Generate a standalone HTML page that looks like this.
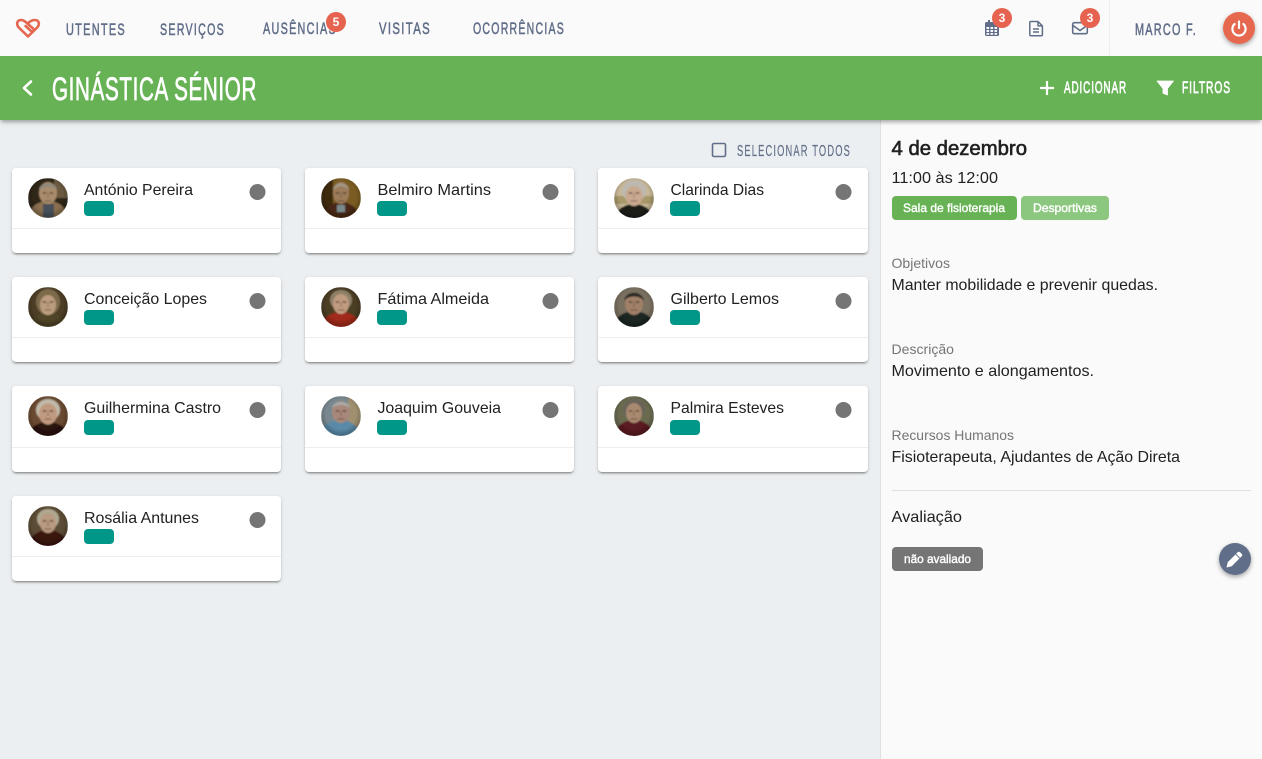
<!DOCTYPE html>
<html lang="pt">
<head>
<meta charset="utf-8">
<title>Ginástica Sénior</title>
<style>
html,body{margin:0;padding:0;width:1262px;height:759px;overflow:hidden;background:#eceff1;font-family:"Liberation Sans",sans-serif}
.b{position:absolute}
#nav{left:0;top:0;width:1262px;height:56px;background:#fafafa}
#bar{left:0;top:56px;width:1262px;height:64px;background:#66b254;box-shadow:0 3px 4px -1px rgba(0,0,0,.35)}
#side{left:880px;top:120px;width:381px;height:639px;background:#fafafa;border-left:1px solid #e0e0e0}
.c{position:absolute;width:269px;background:#fff;border-radius:4px;box-shadow:0 2px 2px -1px rgba(0,0,0,.45),0 1px 4px rgba(0,0,0,.12)}
.c:after{content:"";position:absolute;left:0;right:0;top:60px;height:1px;background:#eeeeee}
.r3:after{top:61px}
svg#t{position:absolute;left:0;top:0}
.n{font-size:16px;fill:#212121}
.h{font-size:17px;fill:#616e89;stroke:#616e89;stroke-width:.55px;letter-spacing:2px}
.w{font-size:16.5px;fill:#fff;stroke:#fff;stroke-width:.7px;letter-spacing:1.5px}
.l{font-size:14px;fill:#757575}
.d{font-size:16px;fill:#212121}
.s{font-size:12px;fill:#fff;stroke:#fff;stroke-width:.4px}
.bn{font-size:12px;fill:#fff;font-weight:bold;text-anchor:middle}
.p{fill:#009688}
.g{fill:#757575}
</style>
</head>
<body>
<div class="b" id="side"></div>
<div class="b" id="nav"></div>
<div class="b" id="bar"></div>
<div class="c" style="left:12px;top:168px;height:85px"></div>
<div class="c" style="left:305px;top:168px;height:85px"></div>
<div class="c" style="left:598px;top:168px;height:85px;width:270px"></div>
<div class="c" style="left:12px;top:277px;height:85px"></div>
<div class="c" style="left:305px;top:277px;height:85px"></div>
<div class="c" style="left:598px;top:277px;height:85px;width:270px"></div>
<div class="c r3" style="left:12px;top:386px;height:86px"></div>
<div class="c r3" style="left:305px;top:386px;height:86px"></div>
<div class="c r3" style="left:598px;top:386px;height:86px;width:270px"></div>
<div class="c" style="left:12px;top:496px;height:85px"></div>
<svg id="t" width="1262" height="759" viewBox="0 0 1262 759" xmlns="http://www.w3.org/2000/svg">
<defs>
<clipPath id="av"><circle cx="20" cy="20" r="20"/></clipPath>
<filter id="bl" x="-20%" y="-20%" width="140%" height="140%"><feGaussianBlur stdDeviation="0.7"/></filter>
<filter id="sh" x="-50%" y="-50%" width="200%" height="200%"><feDropShadow dx="0" dy="2" stdDeviation="2.5" flood-color="#000" flood-opacity=".35"/></filter>
<radialGradient id="vg" cx=".5" cy=".45" r=".55"><stop offset=".7" stop-color="#000" stop-opacity="0"/><stop offset="1" stop-color="#000" stop-opacity=".3"/></radialGradient>
<g id="fd">
<ellipse cx="16.500" cy="15" rx="2" ry="1" fill="#2a1a10" opacity=".45"/>
<ellipse cx="23.500" cy="15" rx="2" ry="1" fill="#2a1a10" opacity=".45"/>
<path d="M20 15v5" stroke="#3a2414" stroke-width="1.500" opacity=".2"/>
<path d="M16.500 23h7" stroke="#3a1a10" stroke-width="1.200" opacity=".4"/>
<circle cx="20" cy="20" r="20" fill="url(#vg)"/>
</g>
</defs>

<!-- nav -->
<rect x="1109" y="0" width="1" height="56" fill="#eeeeee"/>
<path d="M28 36.500 L18.800 27.500 C15.600 24 17.400 19.800 21.300 20 C24 20.100 25.800 22 28.600 24.600 L33 28.400 C34.800 30 32.600 32.400 30.800 30.800 L25.600 26 M28 36.500 L37.200 27.500 C40.400 24 38.600 19.800 34.700 20 C32 20.100 29.600 21.600 28.400 23" fill="none" stroke="#e5674f" stroke-width="2.600" stroke-linecap="round" stroke-linejoin="round"/>
<text class="h" x="66" y="35" textLength="60" lengthAdjust="spacingAndGlyphs">UTENTES</text>
<text class="h" x="160" y="35" textLength="65" lengthAdjust="spacingAndGlyphs">SERVIÇOS</text>
<text class="h" x="263" y="34" textLength="74" lengthAdjust="spacingAndGlyphs">AUSÊNCIAS</text>
<text class="h" x="379" y="34" textLength="52" lengthAdjust="spacingAndGlyphs">VISITAS</text>
<text class="h" x="473" y="34" textLength="92" lengthAdjust="spacingAndGlyphs">OCORRÊNCIAS</text>
<circle cx="336" cy="22" r="10" fill="#e5634f"/>
<text class="bn" x="336" y="26">5</text>

<!-- calendar -->
<g fill="#616e89">
<rect x="985" y="22" width="14" height="14" rx="1.500"/>
<rect x="988" y="20" width="2" height="4"/>
<rect x="994" y="20" width="2" height="4"/>
</g>
<g fill="#fafafa">
<rect x="986.500" y="27" width="2.600" height="2"/><rect x="990.500" y="27" width="2.600" height="2"/><rect x="994.500" y="27" width="2.600" height="2"/>
<rect x="986.500" y="30" width="2.600" height="2"/><rect x="990.500" y="30" width="2.600" height="2"/><rect x="994.500" y="30" width="2.600" height="2"/>
<rect x="986.500" y="33" width="2.600" height="1.800"/><rect x="990.500" y="33" width="2.600" height="1.800"/><rect x="994.500" y="33" width="2.600" height="1.800"/>
</g>
<circle cx="1002" cy="18" r="10" fill="#e5634f"/>
<text class="bn" x="1002" y="22">3</text>
<!-- doc -->
<path d="M1031 21.500h7l4.400 4.400v8.600a1.200 1.200 0 0 1-1.200 1.200h-10.200a1.200 1.200 0 0 1-1.200-1.200v-11.800a1.200 1.200 0 0 1 1.200-1.200zM1038 21.500v4.400h4.400M1033 29h6M1033 32h6" fill="none" stroke="#616e89" stroke-width="1.500" stroke-linejoin="round"/>
<!-- mail -->
<rect x="1072.700" y="22.700" width="14.600" height="11" rx="1.500" fill="none" stroke="#616e89" stroke-width="1.600"/>
<path d="M1073 25.500l7 5 7-5" fill="none" stroke="#616e89" stroke-width="1.600"/>
<circle cx="1090" cy="18" r="10" fill="#e5634f"/>
<text class="bn" x="1090" y="22">3</text>
<text class="h" x="1135" y="35" textLength="62" lengthAdjust="spacingAndGlyphs">MARCO F.</text>
<circle cx="1239" cy="28" r="16" fill="#e5674f" filter="url(#sh)"/>
<path d="M1239 21.500v6.500M1234.600 24a6.600 6.600 0 1 0 8.800 0" fill="none" stroke="#fff" stroke-width="2.200" stroke-linecap="round"/>

<!-- green bar -->
<path d="M31 81.500l-7 6.500 7 6.500" fill="none" stroke="#fff" stroke-width="2.600" stroke-linecap="round" stroke-linejoin="round"/>
<text x="52" y="100" font-size="32" fill="#fff" stroke="#fff" stroke-width=".8" stroke-linejoin="round" letter-spacing="1" textLength="205" lengthAdjust="spacingAndGlyphs">GINÁSTICA SÉNIOR</text>
<path d="M1047 81v14M1040 88h14" stroke="#fff" stroke-width="2.200"/>
<text class="w" x="1064" y="93" textLength="63" lengthAdjust="spacingAndGlyphs">ADICIONAR</text>
<path d="M1157 81h16.500l-6 7.500v6.500l-4.500-1.800v-4.700z" fill="#fff" stroke="#fff" stroke-width=".8" stroke-linejoin="round"/>
<text class="w" x="1182" y="93" textLength="49" lengthAdjust="spacingAndGlyphs">FILTROS</text>

<!-- select all -->
<rect x="712.500" y="143.500" width="13" height="13" rx="1.500" fill="none" stroke="#616e89" stroke-width="1.600"/>
<text x="737" y="156" font-size="16" fill="#616e89" stroke="#616e89" stroke-width=".2" letter-spacing="2" textLength="114" lengthAdjust="spacingAndGlyphs">SELECIONAR TODOS</text>

<!-- names -->
<text class="n" x="84" y="195" textLength="109" lengthAdjust="spacingAndGlyphs">António Pereira</text>
<text class="n" x="377.500" y="195" textLength="113.500" lengthAdjust="spacingAndGlyphs">Belmiro Martins</text>
<text class="n" x="670.500" y="195" textLength="93.500" lengthAdjust="spacingAndGlyphs">Clarinda Dias</text>
<text class="n" x="84" y="304" textLength="123" lengthAdjust="spacingAndGlyphs">Conceição Lopes</text>
<text class="n" x="377.500" y="304" textLength="111.500" lengthAdjust="spacingAndGlyphs">Fátima Almeida</text>
<text class="n" x="670.500" y="304" textLength="108.500" lengthAdjust="spacingAndGlyphs">Gilberto Lemos</text>
<text class="n" x="84" y="413" textLength="137" lengthAdjust="spacingAndGlyphs">Guilhermina Castro</text>
<text class="n" x="377.500" y="413" textLength="123.500" lengthAdjust="spacingAndGlyphs">Joaquim Gouveia</text>
<text class="n" x="670.500" y="413" textLength="113.500" lengthAdjust="spacingAndGlyphs">Palmira Esteves</text>
<text class="n" x="84" y="523" textLength="115" lengthAdjust="spacingAndGlyphs">Rosália Antunes</text>

<!-- pills -->
<rect class="p" x="84" y="201" width="30" height="15" rx="4"/>
<rect class="p" x="377" y="201" width="30" height="15" rx="4"/>
<rect class="p" x="670" y="201" width="30" height="15" rx="4"/>
<rect class="p" x="84" y="310" width="30" height="15" rx="4"/>
<rect class="p" x="377" y="310" width="30" height="15" rx="4"/>
<rect class="p" x="670" y="310" width="30" height="15" rx="4"/>
<rect class="p" x="84" y="420" width="30" height="15" rx="4"/>
<rect class="p" x="377" y="420" width="30" height="15" rx="4"/>
<rect class="p" x="670" y="420" width="30" height="15" rx="4"/>
<rect class="p" x="84" y="529" width="30" height="15" rx="4"/>

<!-- dots -->
<circle class="g" cx="257.500" cy="192" r="8"/>
<circle class="g" cx="550.500" cy="192" r="8"/>
<circle class="g" cx="843.500" cy="192" r="8"/>
<circle class="g" cx="257.500" cy="301" r="8"/>
<circle class="g" cx="550.500" cy="301" r="8"/>
<circle class="g" cx="843.500" cy="301" r="8"/>
<circle class="g" cx="257.500" cy="410" r="8"/>
<circle class="g" cx="550.500" cy="410" r="8"/>
<circle class="g" cx="843.500" cy="410" r="8"/>
<circle class="g" cx="257.500" cy="520" r="8"/>

<!-- avatars -->
<g transform="translate(28 178)" clip-path="url(#av)"><g filter="url(#bl)"><rect width="40" height="40" fill="#2e2618"/><rect x="26" width="14" height="20" fill="#6a5a40"/><ellipse cx="20" cy="38" rx="19" ry="15" fill="#8a7050"/><rect x="15" y="26" width="11" height="14" fill="#465058"/><ellipse cx="20" cy="15" rx="9" ry="11" fill="#a98c6c"/><path d="M11 12C12 3 28 3 29 12C25 8 15 8 11 12z" fill="#8f897c"/><use href="#fd"/></g></g>
<g transform="translate(321 178)" clip-path="url(#av)"><g filter="url(#bl)"><rect width="40" height="40" fill="#7a5c22"/><rect width="12" height="40" fill="#3e2a0c"/><ellipse cx="20" cy="38" rx="17" ry="14" fill="#4a2814"/><rect x="16" y="27" width="8" height="7" fill="#7a8a8a"/><ellipse cx="20" cy="15" rx="8" ry="11" fill="#9c7c5a"/><path d="M12 12C13 3 27 3 28 12C24 7 16 7 12 12z" fill="#a09a88"/><use href="#fd"/></g></g>
<g transform="translate(614 178)" clip-path="url(#av)"><g filter="url(#bl)"><rect width="40" height="40" fill="#c8b898"/><rect y="18" width="40" height="8" fill="#a89868"/><ellipse cx="20" cy="39" rx="18" ry="13" fill="#1f1f18"/><ellipse cx="20" cy="13" rx="12" ry="11" fill="#bdb9b0"/><ellipse cx="20" cy="18" rx="8.500" ry="10" fill="#c9a990"/><use href="#fd"/></g></g>
<g transform="translate(28 287)" clip-path="url(#av)"><g filter="url(#bl)"><rect width="40" height="40" fill="#4c3e26"/><ellipse cx="20" cy="39" rx="18" ry="13" fill="#4f4428"/><ellipse cx="20" cy="15" rx="12" ry="13" fill="#7c6a4c"/><ellipse cx="20" cy="18" rx="8" ry="10" fill="#bc9c7e"/><use href="#fd"/></g></g>
<g transform="translate(321 287)" clip-path="url(#av)"><g filter="url(#bl)"><rect width="40" height="40" fill="#4a3c24"/><ellipse cx="20" cy="39" rx="19" ry="14" fill="#a02a1a"/><ellipse cx="20" cy="13" rx="11" ry="10" fill="#8f8068"/><ellipse cx="20" cy="17" rx="8" ry="10" fill="#c19b80"/><use href="#fd"/></g></g>
<g transform="translate(614 287)" clip-path="url(#av)"><g filter="url(#bl)"><rect width="40" height="40" fill="#7a7060"/><ellipse cx="20" cy="38" rx="19" ry="14" fill="#1c2624"/><ellipse cx="20" cy="17" rx="9" ry="11" fill="#a08068"/><path d="M10 14C11 3 29 3 30 14C26 8 14 8 10 14z" fill="#2a2a28"/><use href="#fd"/></g></g>
<g transform="translate(28 396)" clip-path="url(#av)"><g filter="url(#bl)"><rect width="40" height="40" fill="#6a4a30"/><ellipse cx="20" cy="39" rx="19" ry="13" fill="#2a1210"/><ellipse cx="20" cy="14" rx="12" ry="11" fill="#c0b8a8"/><ellipse cx="20" cy="18" rx="9" ry="10.500" fill="#c09a80"/><use href="#fd"/></g></g>
<g transform="translate(321 396)" clip-path="url(#av)"><g filter="url(#bl)"><rect width="40" height="40" fill="#78888e"/><rect x="27" width="13" height="40" fill="#a09070"/><ellipse cx="19" cy="38" rx="19" ry="14" fill="#5a8aa8"/><ellipse cx="20" cy="16" rx="9" ry="11" fill="#a8887a"/><path d="M11 12C12 4 28 4 29 12C25 8 15 8 11 12z" fill="#aaaaaa"/><use href="#fd"/></g></g>
<g transform="translate(614 396)" clip-path="url(#av)"><g filter="url(#bl)"><rect width="40" height="40" fill="#6a6a50"/><ellipse cx="20" cy="39" rx="19" ry="15" fill="#5a1a20"/><ellipse cx="20" cy="13" rx="11" ry="10" fill="#6a6458"/><ellipse cx="20" cy="17" rx="8" ry="10" fill="#a88a70"/><use href="#fd"/></g></g>
<g transform="translate(28 506)" clip-path="url(#av)"><g filter="url(#bl)"><rect width="40" height="40" fill="#5c4c34"/><ellipse cx="20" cy="39" rx="19" ry="15" fill="#3a1510"/><ellipse cx="20" cy="13" rx="11" ry="10" fill="#b0a890"/><ellipse cx="20" cy="17" rx="8" ry="10" fill="#b89a80"/><use href="#fd"/></g></g>

<!-- side panel -->
<text x="891.500" y="155" font-size="20" fill="#212121" stroke="#212121" stroke-width=".6" textLength="135.500" lengthAdjust="spacingAndGlyphs">4 de dezembro</text>
<text class="d" x="891.500" y="183" textLength="106.500" lengthAdjust="spacingAndGlyphs">11:00 às 12:00</text>
<rect x="892" y="196" width="125" height="24" rx="4" fill="#66b254"/>
<text class="s" x="903" y="212" textLength="102" lengthAdjust="spacingAndGlyphs">Sala de fisioterapia</text>
<rect x="1021" y="196" width="88" height="24" rx="4" fill="#8cc77f"/>
<text class="s" x="1033" y="212" textLength="64" lengthAdjust="spacingAndGlyphs">Desportivas</text>
<text class="l" x="891.500" y="268" textLength="58.500" lengthAdjust="spacingAndGlyphs">Objetivos</text>
<text class="d" x="891.500" y="290" textLength="266.500" lengthAdjust="spacingAndGlyphs">Manter mobilidade e prevenir quedas.</text>
<text class="l" x="891.500" y="354" textLength="62.500" lengthAdjust="spacingAndGlyphs">Descrição</text>
<text class="d" x="891.500" y="376" textLength="202.500" lengthAdjust="spacingAndGlyphs">Movimento e alongamentos.</text>
<text class="l" x="891.500" y="440" textLength="122.500" lengthAdjust="spacingAndGlyphs">Recursos Humanos</text>
<text class="d" x="891.500" y="462" textLength="288.500" lengthAdjust="spacingAndGlyphs">Fisioterapeuta, Ajudantes de Ação Direta</text>
<rect x="892" y="490" width="359" height="1" fill="#e0e0e0"/>
<text class="d" x="891.500" y="522" textLength="70.500" lengthAdjust="spacingAndGlyphs">Avaliação</text>
<rect x="892" y="547" width="91" height="24" rx="4" fill="#757575"/>
<text class="s" x="904" y="563" textLength="67" lengthAdjust="spacingAndGlyphs">não avaliado</text>
<circle cx="1235" cy="559" r="16" fill="#616e89" filter="url(#sh)"/>
<path d="M1226.500 567.500l1.200-5.200 10-10a1.700 1.700 0 0 1 2.400 0l1.600 1.600a1.700 1.700 0 0 1 0 2.400l-10 10z" fill="#fff"/>
<path d="M1235.800 554.200l4 4" stroke="#616e89" stroke-width="1"/>
</svg>
</body>
</html>
